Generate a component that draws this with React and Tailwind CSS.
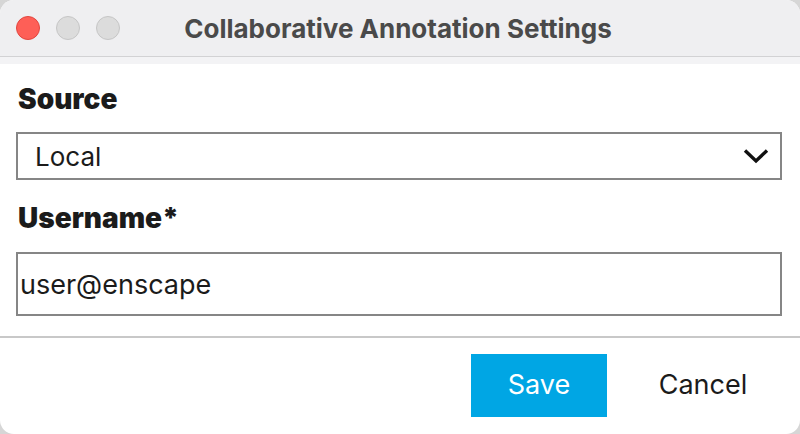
import { useState } from 'react';

export default function App() {
  const [source] = useState('Local');
  const [username, setUsername] = useState('user@enscape');

  return (
    <div className="w-[800px] h-[434px] bg-[#d6d6d6] font-['Inter',sans-serif]">
      <div className="h-full flex flex-col bg-white rounded-[14px] overflow-hidden">
        <div className="h-[57px] shrink-0 grid grid-cols-[1fr_auto_1fr] items-center bg-[#efeff1] border-b border-[#d2d2d4]">
          <div className="flex items-center gap-4 pl-4">
            <span className="w-6 h-6 rounded-full bg-[#fe5f57] border border-[#e2463f]" />
            <span className="w-6 h-6 rounded-full bg-[#dcdcdc] border border-[#c6c6c6]" />
            <span className="w-6 h-6 rounded-full bg-[#dcdcdc] border border-[#c6c6c6]" />
          </div>
          <h1 className="text-[26px] font-bold text-[#4a4a4a] pr-[4px]">
            Collaborative Annotation Settings
          </h1>
          <div />
        </div>
        <div className="h-[7px] shrink-0 bg-[#f3f3f5]" />

        <form className="flex flex-col px-4 pt-[18px]">
          <label className="h-[34px] leading-[34px] pl-[2px] text-[28px] font-black text-[#1b1b1b]">
            Source
          </label>
          <div className="mt-4 w-[766px] h-[48px] flex items-center justify-between border-2 border-[#868686] pl-[17px] pr-[11px]">
            <span className="text-[26px] text-[#1b1b1b]">{source}</span>
            <svg width="26" height="16" viewBox="0 0 26 16" fill="none">
              <path d="M2 2.5 L13 13 L24 2.5" stroke="#111" strokeWidth="3.4" />
            </svg>
          </div>

          <label htmlFor="username" className="mt-[21px] h-[34px] leading-[34px] pl-[2px] text-[28px] font-black text-[#1b1b1b]">
            Username*
          </label>
          <input
            id="username"
            type="text"
            value={username}
            onChange={({ target }) => setUsername(target.value)}
            className="mt-[17px] w-[766px] h-[64px] border-2 border-[#868686] pl-[2px] text-[27px] text-[#1b1b1b] outline-none"
          />
        </form>

        <div className="mt-5 h-[2px] shrink-0 bg-[#c8c8c8]" />

        <div className="flex justify-end gap-[28px] pt-4 pr-[29px]">
          <button type="button" className="w-[136px] h-[63px] bg-[#00a6e4] text-white text-[27px]">
            Save
          </button>
          <button type="button" className="w-[136px] h-[63px] text-[#1b1b1b] text-[27px]">
            Cancel
          </button>
        </div>
      </div>
    </div>
  );
}
